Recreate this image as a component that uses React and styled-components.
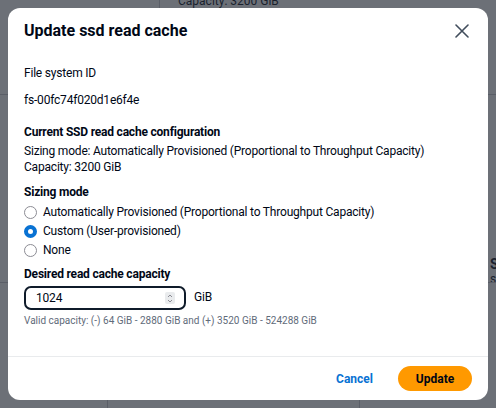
import React, { useState } from "react";
import styled, { createGlobalStyle } from "styled-components";

const GlobalStyle = createGlobalStyle`
  html, body {
    margin: 0;
    padding: 0;
    width: 496px;
    height: 408px;
    overflow: hidden;
    font-family: Roboto, "Open Sans", Arial, sans-serif;
  }
  * { box-sizing: border-box; }
`;

const Page = styled.div`
  position: relative;
  width: 496px;
  height: 408px;
  background: #ffffff;
  overflow: hidden;
  color: #000716;
  font-size: 12px;
`;

const BgRow = styled.div`
  display: flex;
  height: ${(p) => p.$h}px;
  border-bottom: ${(p) => (p.$line ? "1px solid #c6c6cd" : "none")};
`;

const BgCell = styled.div`
  width: ${(p) => p.$w}px;
  flex: ${(p) => (p.$w ? "none" : "1")};
  border-right: ${(p) => (p.$line ? "1px solid #c6c6cd" : "none")};
  padding: ${(p) => p.$pad || "0"};
  font-size: 12px;
  line-height: 16px;
  white-space: nowrap;
  overflow: hidden;
`;

const BgLine = styled.div`
  margin-top: ${(p) => p.$mt || 0}px;
  margin-left: ${(p) => p.$ml || 0}px;
  font-weight: ${(p) => (p.$bold ? 700 : 400)};
  font-size: ${(p) => (p.$bold ? 14 : 12)}px;
  line-height: ${(p) => (p.$lh ? p.$lh : 16)}px;
`;

const Overlay = styled.div`
  position: absolute;
  inset: 0;
  background: rgba(38, 44, 54, 0.68);
  display: flex;
  align-items: flex-start;
  justify-content: center;
  padding-top: 8px;
`;

const Modal = styled.div`
  width: 480px;
  height: 392px;
  background: #ffffff;
  border-radius: 12px;
  display: flex;
  flex-direction: column;
  overflow: hidden;
  letter-spacing: -0.2px;
`;

const Header = styled.div`
  display: flex;
  align-items: center;
  justify-content: space-between;
  padding: 12px 16px 0 16px;
  height: 34px;
`;

const Title = styled.h2`
  margin: 0;
  font-size: 16px;
  line-height: 22px;
  font-weight: 700;
  letter-spacing: 0;
  color: #000716;
`;

const CloseButton = styled.button`
  border: none;
  background: none;
  padding: 0;
  width: 20px;
  height: 20px;
  display: flex;
  align-items: center;
  justify-content: center;
  color: #414d5c;
  cursor: pointer;
`;

const Body = styled.div`
  flex: 1;
  padding: 0 16px;
  display: flex;
  flex-direction: column;
`;

const Text = styled.div`
  margin-top: ${(p) => p.$mt || 0}px;
  font-size: 12px;
  line-height: 16px;
  font-weight: ${(p) => (p.$bold ? 700 : 400)};
  color: #000716;
  white-space: nowrap;
`;

const RadioList = styled.div`
  margin-top: 4px;
  display: flex;
  flex-direction: column;
  gap: 3px;
`;

const RadioRow = styled.label`
  display: flex;
  align-items: center;
  gap: 6px;
  height: 16px;
  font-size: 12px;
  color: #000716;
  cursor: pointer;
`;

const RadioDot = styled.span`
  width: 13px;
  height: 13px;
  border-radius: 50%;
  flex: none;
  border: ${(p) => (p.$on ? "4px solid #0972d3" : "1.5px solid #8c8c94")};
  background: #ffffff;
`;

const InputRow = styled.div`
  margin-top: 4px;
  display: flex;
  align-items: center;
  gap: 8px;
`;

const InputBox = styled.div`
  width: 162px;
  height: 24px;
  border: 2px solid #0f1b2a;
  border-radius: 7px;
  display: flex;
  align-items: center;
  justify-content: space-between;
  padding: 0 9px 0 10px;
  font-size: 12px;
`;

const Spinner = styled.span`
  width: 10px;
  height: 12px;
  background: #e9ebed;
  border-radius: 2px;
  display: flex;
  align-items: center;
  justify-content: center;
`;

const Unit = styled.span`
  font-size: 12px;
  margin-top: -2px;
`;

const Help = styled.div`
  margin-top: 4px;
  font-size: 10px;
  line-height: 14px;
  letter-spacing: 0;
  color: #5f6b7a;
  white-space: nowrap;
`;

const Footer = styled.div`
  height: 44px;
  border-top: 1px solid #e9ebed;
  display: flex;
  align-items: center;
  justify-content: flex-end;
  gap: 25px;
  padding: 0 16px 0 0;
`;

const LinkButton = styled.button`
  border: none;
  background: none;
  padding: 0;
  font-family: inherit;
  font-size: 12px;
  font-weight: 700;
  letter-spacing: 0;
  color: #0972d3;
  cursor: pointer;
`;

const PrimaryButton = styled.button`
  border: none;
  background: #ff9900;
  color: #000716;
  font-family: inherit;
  font-size: 12px;
  font-weight: 700;
  letter-spacing: 0;
  width: 74px;
  height: 25px;
  border-radius: 13px;
  cursor: pointer;
`;

const modes = [
  "Automatically Provisioned (Proportional to Throughput Capacity)",
  "Custom (User-provisioned)",
  "None",
];

export default function App() {
  const [mode, setMode] = useState(1);

  return (
    <>
      <GlobalStyle />
      <Page>
        <BgRow $h={12}>
          <BgCell $w={160} $line />
          <BgCell $pad="0 0 0 18px">
            <BgLine $mt={-7}>Capacity: 3200 GiB</BgLine>
          </BgCell>
        </BgRow>
        <BgRow $h={83} $line />
        <BgRow $h={108}>
          <BgCell $w={8} $pad="98px 0 0 0">
            <BgLine $bold $ml={-56}>
              Location
            </BgLine>
            <BgLine $ml={-20} $mt={2}>
              Cluster
            </BgLine>
          </BgCell>
        </BgRow>
        <BgRow $h={80} $line>
          <BgCell $w={488} />
          <BgCell $pad="53px 0 0 2px">
            <BgLine $bold>Source</BgLine>
            <BgLine $lh={14}>sou</BgLine>
            <BgLine $lh={14}>cap</BgLine>
          </BgCell>
        </BgRow>
        <BgRow $h={125}>
          <BgCell $w={108} $line />
          <BgCell $w={252} $line />
          <BgCell />
        </BgRow>
        <Overlay>
          <Modal role="dialog">
            <Header>
              <Title>Update ssd read cache</Title>
              <CloseButton aria-label="Close">
                <svg width="14" height="14" viewBox="0 0 14 14">
                  <path
                    d="M1 1 L13 13 M13 1 L1 13"
                    stroke="currentColor"
                    strokeWidth="1.6"
                    strokeLinecap="round"
                  />
                </svg>
              </CloseButton>
            </Header>
            <Body>
              <Text $mt={23}>File system ID</Text>
              <Text $mt={11}>fs-00fc74f020d1e6f4e</Text>
              <Text $mt={16} $bold>
                Current SSD read cache configuration
              </Text>
              <Text $mt={3}>
                Sizing mode: Automatically Provisioned (Proportional to
                Throughput Capacity)
              </Text>
              <Text>Capacity: 3200 GiB</Text>
              <Text $mt={9} $bold>
                Sizing mode
              </Text>
              <RadioList>
                {modes.map((m, i) => (
                  <RadioRow key={m} onClick={() => setMode(i)}>
                    <RadioDot $on={mode === i} />
                    {m}
                  </RadioRow>
                ))}
              </RadioList>
              <Text $mt={8} $bold>
                Desired read cache capacity
              </Text>
              <InputRow>
                <InputBox>
                  <span>1024</span>
                  <Spinner>
                    <svg width="6" height="9" viewBox="0 0 6 9">
                      <path
                        d="M1 3 L3 1 L5 3 M1 6 L3 8 L5 6"
                        stroke="#8c8c94"
                        strokeWidth="1"
                        fill="none"
                      />
                    </svg>
                  </Spinner>
                </InputBox>
                <Unit>GiB</Unit>
              </InputRow>
              <Help>
                Valid capacity: (-) 64 GiB - 2880 GiB and (+) 3520 GiB - 524288
                GiB
              </Help>
            </Body>
            <Footer>
              <LinkButton>Cancel</LinkButton>
              <PrimaryButton>Update</PrimaryButton>
            </Footer>
          </Modal>
        </Overlay>
      </Page>
    </>
  );
}
